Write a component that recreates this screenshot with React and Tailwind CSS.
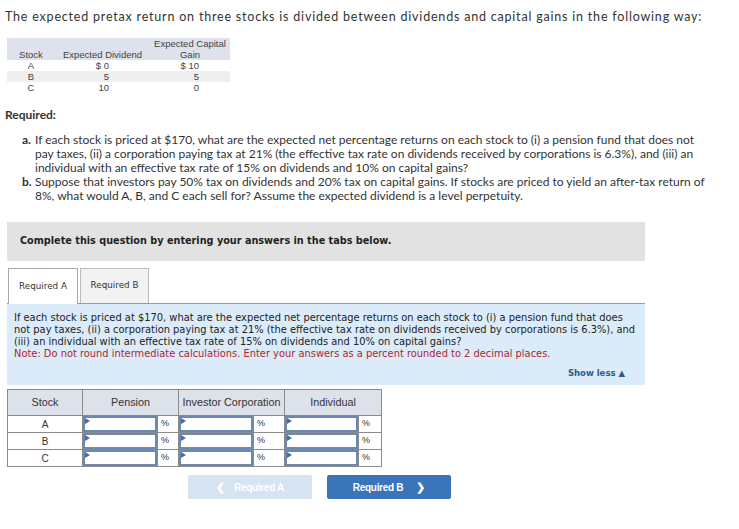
import React from 'react'

const body = { fontFamily: 'Lato, "Open Sans", sans-serif' }
const verdana = { fontFamily: '"DejaVu Sans", Verdana, sans-serif' }
const arial = { fontFamily: '"Liberation Sans", Arial, sans-serif' }

function InputCell({ w }){
  return (
    <td className={`border border-[#8a8a8a] p-0 ${w}`}>
      <div className="relative h-[16px] border-2 border-[#6b89b0] bg-white">
        <span className="absolute left-0 top-0 w-0 h-0 border-t-[3px] border-b-[3px] border-l-[5px] border-t-transparent border-b-transparent border-l-[#3c6fb0]" />
      </div>
    </td>
  )
}

export default function App(){
  const rows = [
    { s: 'A', d: '$ 0', g: '$ 10', bg: 'bg-white' },
    { s: 'B', d: '5', g: '5', bg: 'bg-[#efefef]' },
    { s: 'C', d: '10', g: '0', bg: 'bg-white' },
  ]

  return (
    <div className="w-[739px] h-[529px] bg-white overflow-hidden text-[#333]" style={body}>
      <p className="pl-[5px] pt-[9px] text-[12.5px] leading-[16px] tracking-[0.8px] whitespace-nowrap">The expected pretax return on three stocks is divided between dividends and capital gains in the following way:</p>

      <table className="ml-[7px] mt-[13px] w-[223px] text-[9.5px] leading-[11px] text-[#444] border-collapse" style={arial}>
        <thead>
          <tr className="bg-[#dde2ec]">
            <th className="font-normal align-bottom w-[48px] pt-[1px]">Stock</th>
            <th className="font-normal align-bottom w-[95px]">Expected Dividend</th>
            <th className="font-normal align-bottom">Expected Capital<br/>Gain</th>
          </tr>
        </thead>
        <tbody>
          {rows.map(r => (
            <tr key={r.s} className={r.bg}>
              <td className="text-center">{r.s}</td>
              <td className="text-right pr-[41px]">{r.d}</td>
              <td className="text-right pr-[31px]">{r.g}</td>
            </tr>
          ))}
        </tbody>
      </table>

      <p className="pl-[5px] mt-[14px] text-[12px] leading-[16px] font-bold">Required:</p>

      <div className="mt-[10px] pl-[22px] pr-[30px] text-[12px] leading-[14px]">
        <div className="flex">
          <span className="w-[13px] font-bold shrink-0">a.</span>
          <span>If each stock is priced at $170, what are the expected net percentage returns on each stock to (i) a pension fund that does not pay taxes, (ii) a corporation paying tax at 21% (the effective tax rate on dividends received by corporations is 6.3%), and (iii) an individual with an effective tax rate of 15% on dividends and 10% on capital gains?</span>
        </div>
        <div className="flex">
          <span className="w-[13px] font-bold shrink-0">b.</span>
          <span>Suppose that investors pay 50% tax on dividends and 20% tax on capital gains. If stocks are priced to yield an after-tax return of 8%, what would A, B, and C each sell for? Assume the expected dividend is a level perpetuity.</span>
        </div>
      </div>

      <div className="ml-[7px] mt-[19px] w-[638px] h-[39px] bg-[#e2e2e2] flex items-center pl-[13px] text-[9.7px] font-bold text-[#222]" style={verdana}>
        Complete this question by entering your answers in the tabs below.
      </div>

      <div className="ml-[7px] mt-[6px] w-[638px]" style={verdana}>
        <div className="flex items-end h-[36px]">
          <div className="ml-[1px] w-[70px] h-[36px] border border-b-0 border-[#a9a9a9] bg-white flex items-center justify-center text-[8.8px] text-[#333] relative top-[1px]">Required A</div>
          <div className="ml-[2px] w-[69px] h-[35px] border border-b-0 border-[#bdbdbd] bg-[#f2f2f2] flex items-center justify-center text-[8.8px] text-[#333]">Required B</div>
        </div>
        <div className="border-t border-[#9a9a9a] bg-[#dcebf9] h-[82px] pl-[7px] pr-[8px] pt-[8px] text-[9.9px] leading-[12px] text-[#222]">
          <p>If each stock is priced at $170, what are the expected net percentage returns on each stock to (i) a pension fund that does not pay taxes, (ii) a corporation paying tax at 21% (the effective tax rate on dividends received by corporations is 6.3%), and (iii) an individual with an effective tax rate of 15% on dividends and 10% on capital gains?</p>
          <p className="text-[#b0262b]">Note: Do not round intermediate calculations. Enter your answers as a percent rounded to 2 decimal places.</p>
          <p className="mt-[7px] pr-[12px] text-right text-[8.5px] font-bold text-[#2b5a8c]">Show less ▲</p>
        </div>
      </div>

      <table className="ml-[7px] mt-[4px] border-collapse text-[10.8px] text-[#333]" style={arial}>
        <thead>
          <tr className="bg-[#dde1ea] h-[26px]">
            <th className="border border-[#8a8a8a] font-normal w-[75px]">Stock</th>
            <th colSpan={2} className="border border-[#8a8a8a] font-normal w-[96px]">Pension</th>
            <th colSpan={2} className="border border-[#8a8a8a] font-normal w-[106px]">Investor Corporation</th>
            <th colSpan={2} className="border border-[#8a8a8a] font-normal w-[97px]">Individual</th>
          </tr>
        </thead>
        <tbody className="text-[10px]">
          {['A', 'B', 'C'].map(s => (
            <tr key={s}>
              <td className="border border-[#8a8a8a] text-center h-[17px]">{s}</td>
              <InputCell w="w-[75px]" />
              <td className="border border-[#8a8a8a] pl-[3px] text-[9px] w-[21px]">%</td>
              <InputCell w="w-[75px]" />
              <td className="border border-[#8a8a8a] pl-[3px] text-[9px] w-[31px]">%</td>
              <InputCell w="w-[74px]" />
              <td className="border border-[#8a8a8a] pl-[3px] text-[9px] w-[23px]">%</td>
            </tr>
          ))}
        </tbody>
      </table>

      <div className="flex ml-[188px] mt-[8px] gap-[15px] text-[10px] font-bold text-white" style={arial}>
        <div className="w-[124px] h-[24px] rounded-[2px] bg-[#d6e3f0] flex items-center justify-center gap-[9px]">
          <span className="text-[11px]">&#x276E;</span><span className="tracking-[-0.3px]">Required A</span>
        </div>
        <div className="w-[124px] h-[24px] rounded-[2px] bg-[#3a74b9] flex items-center justify-center gap-[13px]">
          <span className="tracking-[-0.3px]">Required B</span><span className="text-[11px]">&#x276F;</span>
        </div>
      </div>
    </div>
  )
}
